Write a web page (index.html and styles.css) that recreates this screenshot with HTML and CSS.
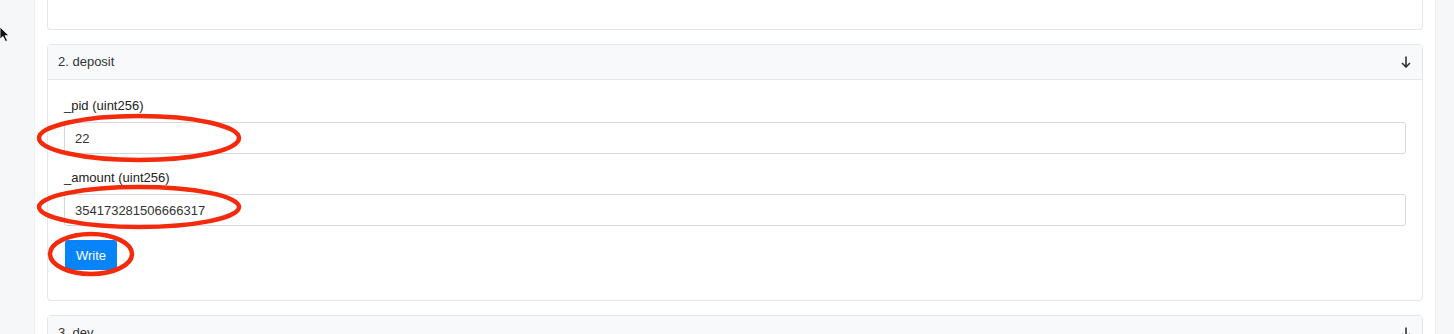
FILE: index.html
```html
<!DOCTYPE html>
<html>

<head>
  <title>Write Contract</title>
  <link rel="stylesheet" href="styles.css">
</head>

<body>
  <div class="page">
    <div class="side"></div>
    <div class="main">
      <div class="card card-tail"></div>

      <div class="card">
        <div class="card-header">
          <span>2. deposit</span>
          <svg class="arrow" width="10" height="12" viewBox="0 0 10 12"><path d="M5 0.5V11M1 7l4 4 4-4" fill="none" stroke="#333" stroke-width="1.6"/></svg>
        </div>
        <div class="card-body">
          <div class="form-group">
            <label>_pid (uint256)</label>
            <input type="text" value="22">
          </div>
          <div class="form-group">
            <label>_amount (uint256)</label>
            <input type="text" value="354173281506666317">
          </div>
          <button type="button">Write</button>
        </div>
      </div>

      <div class="card">
        <div class="card-header">
          <span>3. dev</span>
          <svg class="arrow" width="10" height="12" viewBox="0 0 10 12"><path d="M5 0.5V11M1 7l4 4 4-4" fill="none" stroke="#333" stroke-width="1.6"/></svg>
        </div>
      </div>
    </div>
    <div class="side"></div>
  </div>

  <!-- annotations drawn over the screenshot -->
  <svg class="marks" width="1454" height="334" viewBox="0 0 1454 334">
    <ellipse cx="139" cy="138" rx="100" ry="22" />
    <ellipse cx="139" cy="207" rx="100" ry="20" />
    <ellipse cx="91" cy="254" rx="41" ry="20" />
  </svg>
  <svg class="cursor" width="12" height="16" viewBox="0 0 12 16"><path d="M0 0L0 12L3 9.5L5.5 14.5L7.5 13.5L5 8.7L9 8.7Z" fill="#111" stroke="#fff" stroke-width="0.8"/></svg>
</body>

</html>
```

FILE: styles.css
```css
body {
  margin: 0;
  padding: 0;
  font-family: "Liberation Sans", Arial, sans-serif;
  font-size: 13px;
  color: #1e2022;
  background-color: #f6f7f9;
  overflow: hidden;
  height: 334px;
}

.page {
  display: flex;
  height: 334px;
}

.side {
  width: 34px;
  flex-shrink: 0;
  background-color: #f6f7f9;
}

.side:last-child {
  width: 18px;
}

.main {
  flex: 1;
  background-color: #fff;
  padding: 0 12px;
  border-left: 1px solid #eef0f3;
  border-right: 1px solid #eef0f3;
}

.card {
  border: 1px solid #e3e6eb;
  border-radius: 4px;
  margin-bottom: 14px;
  background-color: #fff;
}

.card-tail {
  height: 29px;
  border-top: none;
  border-radius: 0 0 4px 4px;
}

.card-header {
  display: flex;
  justify-content: space-between;
  align-items: center;
  height: 34px;
  padding: 0 11px 0 10px;
  background-color: #f8f9fa;
  border-bottom: 1px solid #e3e6eb;
  color: #333;
}

.card-header span {
  margin-top: -1px;
}

.arrow {
  display: block;
}

.card-body {
  padding: 16px 16px 30px 16px;
}

.form-group {
  margin-bottom: 14px;
}

label {
  display: block;
  line-height: 20px;
  margin-bottom: 6px;
  color: #222;
}

input[type="text"] {
  display: block;
  width: 100%;
  height: 32px;
  box-sizing: border-box;
  padding: 0 10px;
  border: 1px solid #d5d8dd;
  border-radius: 3px;
  font-family: "Liberation Sans", Arial, sans-serif;
  font-size: 13px;
  color: #333;
}

button {
  height: 30px;
  padding: 0 11px;
  margin-left: 1px;
  background-color: #0784fa;
  color: #fff;
  border: none;
  border-radius: 3px;
  font-family: "Liberation Sans", Arial, sans-serif;
  font-size: 13px;
}

.marks {
  position: absolute;
  left: 0;
  top: 0;
  pointer-events: none;
}

.marks ellipse {
  fill: none;
  stroke: #f42a0c;
  stroke-width: 4.5;
}

.cursor {
  position: absolute;
  left: 0;
  top: 27px;
}
```
